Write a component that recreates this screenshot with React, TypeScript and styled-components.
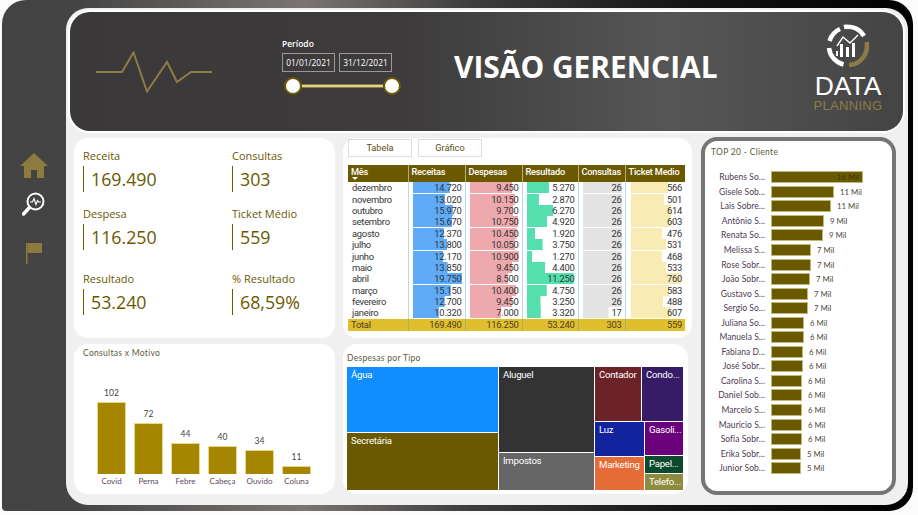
import styled, { createGlobalStyle } from 'styled-components';

const GlobalStyle = createGlobalStyle`
  html, body {
    margin: 0;
    padding: 0;
    background: #fbfbfb;
    overflow: hidden;
  }
`;

const GOLD = '#6b5900';

const Frame = styled.div`
  width: 911px;
  height: 511px;
  margin-left: 2px;
  display: flex;
  box-sizing: border-box;
  padding: 8px 5px 6px 0;
  border-radius: 24px 24px 24px 4px;
  background: linear-gradient(90deg, #434343 0%, #444 8%, #7a7572 33%, #3c3c3c 52%, #141414 75%, #000 100%);
`;

const Sidebar = styled.nav`
  width: 64px;
  flex-shrink: 0;
  display: flex;
  flex-direction: column;
  align-items: center;
  padding-top: 145px;
  box-sizing: border-box;
`;

const NavIcon = styled.svg<{ $gap: number }>`
  display: block;
  margin-bottom: ${(p) => p.$gap}px;
`;

const Panel = styled.div`
  flex: 1;
  min-width: 0;
  background: #f0f0f0;
  border-radius: 22px;
  padding: 4px 5px 0 4px;
  box-sizing: border-box;
  display: flex;
  flex-direction: column;
  gap: 7px;
`;

const Header = styled.header`
  height: 119px;
  flex-shrink: 0;
  display: flex;
  align-items: center;
  border-radius: 20px;
  padding: 0 20px 0 25px;
  box-sizing: border-box;
  box-shadow: 0 0 0 2px #fff;
  background: linear-gradient(90deg, #3a3839 0%, #3d3b3c 40%, #565656 72%, #444 100%);
`;

const Period = styled.div`
  width: 110px;
  margin-left: 69px;
  padding-bottom: 10px;
  display: flex;
  flex-direction: column;
`;

const PeriodLabel = styled.span`
  font: 600 8.5px 'Open Sans', sans-serif;
  color: #fff;
  margin-bottom: 4px;
`;

const Dates = styled.div`
  display: flex;
  gap: 4px;
`;

const DateBox = styled.div`
  width: 53px;
  height: 19px;
  border: 1px solid #999;
  box-sizing: border-box;
  color: #fff;
  font: 400 8.4px/17px 'Open Sans', sans-serif;
  text-align: center;
`;

const Slider = styled.div`
  display: flex;
  align-items: center;
  margin: 5px -9px 0 2px;
`;

const Handle = styled.span`
  width: 18px;
  height: 18px;
  box-sizing: border-box;
  border-radius: 50%;
  background: #fff;
  border: 2px solid #6b5900;
  flex-shrink: 0;
`;

const Track = styled.span`
  flex: 1;
  height: 2px;
  background: #d9d2a0;
  border-top: 1px solid #8d7c2a;
  border-bottom: 1px solid #8d7c2a;
`;

const Title = styled.h1`
  margin: 0 0 0 62px;
  padding-bottom: 11px;
  font: 700 29.9px 'Open Sans', sans-serif;
  color: #fff;
  white-space: nowrap;
`;

const Logo = styled.div`
  margin-left: auto;
  padding-bottom: 8px;
  display: flex;
  flex-direction: column;
  align-items: center;
  width: 70px;
`;

const LogoData = styled.span`
  font: 400 26.5px/27px 'Liberation Sans', sans-serif;
  color: #fff;
  margin-top: 5px;
`;

const LogoPlanning = styled.span`
  font: 400 13px/11px 'Liberation Sans', sans-serif;
  color: #8d7c45;
  letter-spacing: 0.3px;
`;

const Body = styled.div`
  display: grid;
  grid-template-columns: 261px 349px 196px;
  grid-template-rows: 200px 150px;
  column-gap: 8px;
  row-gap: 6px;
  padding-left: 4px;
`;

const Card = styled.section`
  background: #fff;
  border-radius: 14px;
  box-sizing: border-box;
  min-width: 0;
`;

const KpiCard = styled(Card)`
  display: grid;
  grid-template-columns: 149px 1fr;
  grid-template-rows: 58px 65px 1fr;
  padding: 10px 0 0 9px;
`;

const Kpi = styled.div`
  display: flex;
  flex-direction: column;
`;

const KpiLabel = styled.span`
  font: 400 11px/15px 'Open Sans', sans-serif;
  color: ${GOLD};
`;

const KpiValue = styled.span`
  margin-top: 3px;
  height: 26px;
  border-left: 1.5px solid ${GOLD};
  padding-left: 7px;
  font: 500 17.8px/26px 'Open Sans', sans-serif;
  color: ${GOLD};
`;

const TableCard = styled(Card)`
  padding: 1px 7px 0 5px;
  display: flex;
  flex-direction: column;
`;

const Tabs = styled.div`
  display: flex;
  gap: 6px;
  margin-bottom: 8px;
`;

const Tab = styled.div`
  width: 64px;
  height: 18px;
  box-sizing: border-box;
  border: 1px solid #ddd;
  text-align: center;
  font: 400 9.2px/15px 'Roboto', sans-serif;
  color: #5a4d10;
`;

const Table = styled.table`
  width: 337px;
  table-layout: fixed;
  border-collapse: collapse;
  font: 400 9.4px 'Roboto', sans-serif;
  letter-spacing: -0.25px;
  color: #333;
`;

const HeadCell = styled.th`
  height: 17px;
  padding: 1px 0 0 3px;
  box-sizing: border-box;
  background: ${GOLD};
  color: #fff;
  font: 500 9.2px/11px 'Roboto', sans-serif;
  letter-spacing: -0.2px;
  text-align: left;
  vertical-align: top;
  border-right: 1px solid #b7ad7a;
  white-space: nowrap;
  overflow: hidden;
  &:last-child {
    border-right: none;
  }
`;

const SortMark = styled.span`
  display: block;
  width: 0;
  height: 0;
  margin-left: 1px;
  border-left: 3px solid transparent;
  border-right: 3px solid transparent;
  border-top: 3px solid #fff;
`;

const Cell = styled.td`
  height: 11.4px;
  line-height: 11px;
  padding: 0;
`;

const MonthCell = styled(Cell)`
  padding-left: 4px;
  border-right: 1px solid #bcd6ee;
`;

const BarCell = styled(Cell)<{ $color: string; $pct: number; $inset: number }>`
  padding-right: 3px;
  text-align: right;
  border-right: 1px solid #bcd6ee;
  background: linear-gradient(${(p) => p.$color}, ${(p) => p.$color}) no-repeat ${(p) => p.$inset}px 50% /
    ${(p) => p.$pct}% 11px;
  &:last-child {
    border-right: none;
  }
`;

const TotalCell = styled.td<{ $first?: boolean }>`
  height: 12px;
  padding: 0 3px;
  background: #e0bf2c;
  text-align: ${(p) => (p.$first ? 'left' : 'right')};
  color: #4b4020;
  line-height: 12px;
  border-right: 1px solid #b9ae5c;
  &:last-child {
    border-right: none;
  }
`;

const TopCard = styled(Card)`
  grid-column: 3;
  grid-row: 1 / 3;
  margin: -1px 0 0 1px;
  height: 358px;
  border: 4px solid #757575;
  border-radius: 16px;
  padding: 5px 0 0 6px;
`;

const ChartTitle = styled.div`
  font: 400 8.5px/12px 'Lato', sans-serif;
  letter-spacing: 0.3px;
  color: #605a3a;
`;

const TopList = styled.div`
  margin-top: 12px;
  display: flex;
  flex-direction: column;
`;

const TopRow = styled.div`
  height: 14.55px;
  display: flex;
  align-items: center;
`;

const TopName = styled.span`
  width: 54px;
  flex-shrink: 0;
  margin-right: 6px;
  text-align: right;
  font: 400 8.5px 'Lato', sans-serif;
  letter-spacing: 0.05px;
  color: #4e3a52;
  white-space: nowrap;
`;

const TopBar = styled.div`
  height: 12px;
  box-sizing: border-box;
  border: 1px solid #c2b77a;
  background: ${GOLD};
  flex-shrink: 0;
`;

const TopValue = styled.span<{ $inside?: boolean }>`
  font: 400 7.8px 'Lato', sans-serif;
  color: ${(p) => (p.$inside ? '#3f3400' : '#4a4a3a')};
  margin-left: ${(p) => (p.$inside ? '-26px' : '6px')};
  white-space: nowrap;
`;

const MotivoCard = styled(Card)`
  padding: 3px 9px 0 9px;
  display: flex;
  flex-direction: column;
`;

const Columns = styled.div`
  margin: auto 0 7px 14px;
  display: flex;
  align-items: flex-end;
  gap: 8px;
`;

const Column = styled.div`
  width: 29px;
  display: flex;
  flex-direction: column;
  align-items: center;
`;

const ColumnValue = styled.span`
  font: 400 8.5px 'Lato', sans-serif;
  color: #444;
  margin-bottom: 4px;
`;

const ColumnBar = styled.div`
  width: 100%;
  background: #a68600;
  border: 1px solid #ead98a;
  border-bottom: none;
  box-sizing: border-box;
`;

const ColumnName = styled.span`
  font: 400 8px/12px 'Lato', sans-serif;
  color: #5a4a60;
  margin-top: 1px;
`;

const TreeCard = styled(Card)`
  padding: 8px 5px 0 4px;
  width: 345px;
  height: 150px;
  display: flex;
  flex-direction: column;
`;

const TreeMap = styled.div`
  margin-top: 3px;
  height: 123px;
  display: flex;
  gap: 1px;
`;

const Stack = styled.div<{ $w?: number; $grow?: boolean }>`
  display: flex;
  flex-direction: column;
  gap: 1px;
  width: ${(p) => (p.$w ? `${p.$w}px` : 'auto')};
  flex: ${(p) => (p.$grow ? 1 : 'none')};
  min-width: 0;
`;

const Line = styled.div<{ $h?: number; $grow?: boolean }>`
  display: flex;
  gap: 1px;
  height: ${(p) => (p.$h ? `${p.$h}px` : 'auto')};
  flex: ${(p) => (p.$grow ? 1 : 'none')};
`;

const Tile = styled.div<{ $bg: string; $w?: number; $h?: number }>`
  background: ${(p) => p.$bg};
  width: ${(p) => (p.$w ? `${p.$w}px` : 'auto')};
  height: ${(p) => (p.$h ? `${p.$h}px` : 'auto')};
  flex: ${(p) => (p.$w || p.$h ? 'none' : 1)};
  min-width: 0;
  color: #fff;
  font: 400 9.6px/12px 'Roboto', sans-serif;
  letter-spacing: -0.25px;
  padding: 2px 0 0 4px;
  box-sizing: border-box;
  overflow: hidden;
  white-space: nowrap;
`;

const months: [string, number, number, number, number, number][] = [
  ['dezembro', 14720, 9450, 5270, 26, 566],
  ['novembro', 13020, 10150, 2870, 26, 501],
  ['outubro', 15970, 9700, 6270, 26, 614],
  ['setembro', 15670, 10750, 4920, 26, 603],
  ['agosto', 12370, 10450, 1920, 26, 476],
  ['julho', 13800, 10050, 3750, 26, 531],
  ['junho', 12170, 10900, 1270, 26, 468],
  ['maio', 13850, 9450, 4400, 26, 533],
  ['abril', 19750, 8500, 11250, 26, 760],
  ['março', 15150, 10400, 4750, 26, 583],
  ['fevereiro', 12700, 9450, 3250, 26, 488],
  ['janeiro', 10320, 7000, 3320, 17, 607],
];

const metrics = [
  { color: '#5fabf8', max: 19750, span: 88, inset: 4 },
  { color: '#eda9ae', max: 10900, span: 87, inset: 4 },
  { color: '#55dfae', max: 11250, span: 85, inset: 4 },
  { color: '#e3e3e3', max: 26, span: 85, inset: 4 },
  { color: '#f8ecb4', max: 760, span: 85, inset: 5 },
];

const fmt = (n: number) => n.toLocaleString('de-DE');

const clients: [string, number, string][] = [
  ['Rubens So...', 92, '16 Mil'],
  ['Gisele Sob...', 63, '11 Mil'],
  ['Lais Sobre...', 60, '11 Mil'],
  ['Antônio S...', 53, '9 Mil'],
  ['Renata So...', 52, '9 Mil'],
  ['Melissa S...', 40, '7 Mil'],
  ['Rose Sobr...', 40, '7 Mil'],
  ['João Sobr...', 39, '7 Mil'],
  ['Gustavo S...', 37, '7 Mil'],
  ['Sergio So...', 37, '7 Mil'],
  ['Juliana So...', 33, '6 Mil'],
  ['Manuela S...', 33, '6 Mil'],
  ['Fabiana D...', 32, '6 Mil'],
  ['José Sobr...', 32, '6 Mil'],
  ['Carolina S...', 31, '6 Mil'],
  ['Daniel Sob...', 31, '6 Mil'],
  ['Marcelo S...', 31, '6 Mil'],
  ['Mauricio S...', 31, '6 Mil'],
  ['Sofia Sobr...', 31, '6 Mil'],
  ['Erika Sobr...', 30, '5 Mil'],
  ['Junior Sob...', 30, '5 Mil'],
];

const motivos: [string, number][] = [
  ['Covid', 102],
  ['Perna', 72],
  ['Febre', 44],
  ['Cabeça', 40],
  ['Ouvido', 34],
  ['Coluna', 11],
];

const kpis = [
  ['Receita', '169.490'],
  ['Consultas', '303'],
  ['Despesa', '116.250'],
  ['Ticket Médio', '559'],
  ['Resultado', '53.240'],
  ['% Resultado', '68,59%'],
];

const heads = ['Mês', 'Receitas', 'Despesas', 'Resultado', 'Consultas', 'Ticket Medio'];
const totals = ['Total', '169.490', '116.250', '53.240', '303', '559'];
const widths = [60, 57, 57, 56, 47, 60];

const HomeIcon = () => (
  <NavIcon $gap={14} width="28" height="25" viewBox="0 0 28 25">
    <path d="M14 0 L28 13 L24 13 L24 25 L17 25 L17 17 L11 17 L11 25 L4 25 L4 13 L0 13 Z" fill="#8d7a3f" />
  </NavIcon>
);

const SearchIcon = () => (
  <NavIcon $gap={26} width="24" height="25" viewBox="0 0 24 25">
    <circle cx="13.5" cy="9.5" r="8" fill="none" stroke="#fff" strokeWidth="2" />
    <path d="M7.5 15.5 L1.5 22" stroke="#fff" strokeWidth="3.4" strokeLinecap="round" />
    <path d="M8 10 L10.5 10 L12 6.5 L14 12.5 L15.5 8.5 L16.5 10 L19 10" fill="none" stroke="#fff" strokeWidth="1.1" />
  </NavIcon>
);

const FlagIcon = () => (
  <NavIcon $gap={0} width="18" height="21" viewBox="0 0 18 21">
    <path d="M1 0 L2.5 0 L2.5 21 L1 21 Z" fill="#8d7a3f" />
    <path d="M2.5 0 L17 0 L17 10 L2.5 10 Z" fill="#8d7a3f" />
  </NavIcon>
);

const PulseLine = () => (
  <svg width="118" height="42" viewBox="0 0 118 42">
    <path
      d="M1 21 L27 21 L38.5 1.5 L52 40.5 L72 11 L82 31 L96 21 L117 21"
      fill="none"
      stroke="#8d7c45"
      strokeWidth="2"
    />
  </svg>
);

const LogoMark = () => (
  <svg width="44" height="44" viewBox="0 0 44 44">
    <g fill="none" strokeWidth="4.5">
      <path d="M14 5 A19 19 0 0 0 3.5 17" stroke="#fff" />
      <path d="M3 24 A19 19 0 0 0 17.5 40.5" stroke="#fff" />
      <path d="M18 3 A19 19 0 0 1 38 12" stroke="#fff" />
      <path d="M40.5 18 A19 19 0 0 1 23 41" stroke="#8d7c45" />
    </g>
    <path d="M11 22 L17 13 L24 19 L32 11" fill="none" stroke="#fff" strokeWidth="1.4" />
    <g fill="#fff">
      <rect x="10" y="27" width="2" height="5" />
      <rect x="14" y="20" width="3" height="13" />
      <rect x="20" y="23" width="3" height="10" />
      <rect x="26" y="19" width="3" height="14" />
    </g>
  </svg>
);

export default function App() {
  return (
    <>
      <GlobalStyle />
      <Frame>
        <Sidebar>
          <HomeIcon />
          <SearchIcon />
          <FlagIcon />
        </Sidebar>
        <Panel>
          <Header>
            <PulseLine />
            <Period>
              <PeriodLabel>Período</PeriodLabel>
              <Dates>
                <DateBox>01/01/2021</DateBox>
                <DateBox>31/12/2021</DateBox>
              </Dates>
              <Slider>
                <Handle />
                <Track />
                <Handle />
              </Slider>
            </Period>
            <Title>VISÃO GERENCIAL</Title>
            <Logo>
              <LogoMark />
              <LogoData>DATA</LogoData>
              <LogoPlanning>PLANNING</LogoPlanning>
            </Logo>
          </Header>
          <Body>
            <KpiCard>
              {kpis.map(([label, value]) => (
                <Kpi key={label}>
                  <KpiLabel>{label}</KpiLabel>
                  <KpiValue>{value}</KpiValue>
                </Kpi>
              ))}
            </KpiCard>
            <TableCard>
              <Tabs>
                <Tab>Tabela</Tab>
                <Tab>Gráfico</Tab>
              </Tabs>
              <Table>
                <colgroup>
                  {widths.map((w, i) => (
                    <col key={i} width={w} />
                  ))}
                </colgroup>
                <thead>
                  <tr>
                    {heads.map((h, i) => (
                      <HeadCell key={h}>
                        {h}
                        {i === 0 && <SortMark />}
                      </HeadCell>
                    ))}
                  </tr>
                </thead>
                <tbody>
                  {months.map(([name, ...values]) => (
                    <tr key={name}>
                      <MonthCell>{name}</MonthCell>
                      {values.map((v, i) => (
                        <BarCell
                          key={i}
                          $color={metrics[i].color}
                          $inset={metrics[i].inset}
                          $pct={(v / metrics[i].max) * metrics[i].span}
                        >
                          {fmt(v)}
                        </BarCell>
                      ))}
                    </tr>
                  ))}
                  <tr>
                    {totals.map((t, i) => (
                      <TotalCell key={t} $first={i === 0}>
                        {t}
                      </TotalCell>
                    ))}
                  </tr>
                </tbody>
              </Table>
            </TableCard>
            <TopCard>
              <ChartTitle>TOP 20 - Cliente</ChartTitle>
              <TopList>
                {clients.map(([name, w, value], i) => (
                  <TopRow key={name}>
                    <TopName>{name}</TopName>
                    <TopBar style={{ width: w }} />
                    <TopValue $inside={i === 0}>{value}</TopValue>
                  </TopRow>
                ))}
              </TopList>
            </TopCard>
            <MotivoCard>
              <ChartTitle>Consultas x Motivo</ChartTitle>
              <Columns>
                {motivos.map(([name, v]) => (
                  <Column key={name}>
                    <ColumnValue>{v}</ColumnValue>
                    <ColumnBar style={{ height: v * 0.71 }} />
                    <ColumnName>{name}</ColumnName>
                  </Column>
                ))}
              </Columns>
            </MotivoCard>
            <TreeCard>
              <ChartTitle>Despesas por Tipo</ChartTitle>
              <TreeMap>
                <Stack $w={151}>
                  <Tile $bg="#118dff" $h={65}>Água</Tile>
                  <Tile $bg="#6b5900">Secretária</Tile>
                </Stack>
                <Stack $w={95}>
                  <Tile $bg="#333333" $h={85}>Aluguel</Tile>
                  <Tile $bg="#666666">Impostos</Tile>
                </Stack>
                <Stack $grow>
                  <Line $h={54}>
                    <Tile $bg="#6b2328" $w={46}>Contador</Tile>
                    <Tile $bg="#361b66">Condo...</Tile>
                  </Line>
                  <Line $grow>
                    <Stack $w={49}>
                      <Tile $bg="#12239e" $h={34}>Luz</Tile>
                      <Tile $bg="#e66c37">Marketing</Tile>
                    </Stack>
                    <Stack $grow>
                      <Tile $bg="#6b007b" $h={33}>Gasoli...</Tile>
                      <Tile $bg="#0b4a2d" $h={17}>Papel...</Tile>
                      <Tile $bg="#8d8b3f">Telefo...</Tile>
                    </Stack>
                  </Line>
                </Stack>
              </TreeMap>
            </TreeCard>
          </Body>
        </Panel>
      </Frame>
    </>
  );
}
